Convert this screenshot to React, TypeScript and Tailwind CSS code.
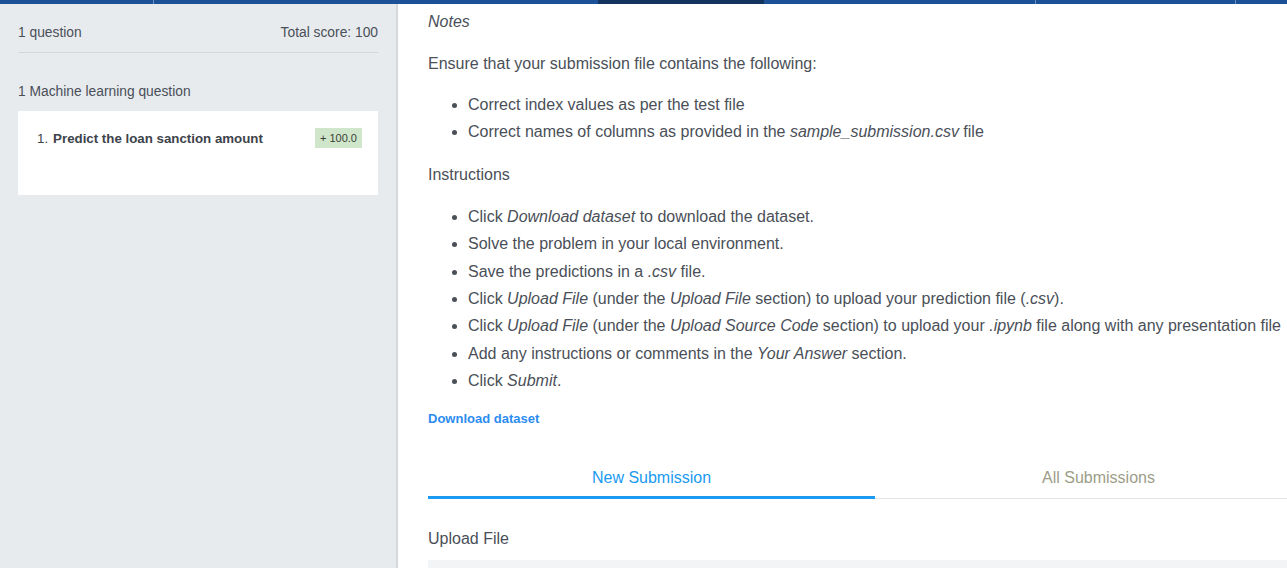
import React from "react";

const font = { fontFamily: '"Liberation Sans", Arial, sans-serif' };

export default function App() {
  return (
    <div className="h-[568px] w-[1287px] overflow-hidden bg-white flex flex-col" style={font}>
      <div className="flex h-[4px] shrink-0 bg-[#1d5197]">
        <div className="w-[153px] bg-[#1d5197]" />
        <div className="w-px bg-[#6b8fc0]" />
        <div className="w-[444px] bg-[#1d5197]" />
        <div className="w-[166px] bg-[#12345e]" />
        <div className="w-[271px] bg-[#1d5197]" />
        <div className="w-px bg-[#6b8fc0]" />
        <div className="w-[199px] bg-[#1d5197]" />
        <div className="w-px bg-[#6b8fc0]" />
        <div className="flex-1 bg-[#1d5197]" />
      </div>
      <div className="flex flex-1 min-h-0">
        <aside className="w-[398px] shrink-0 bg-[#e7ebee] border-r-2 border-[#d5d9dc] px-[18px] pt-[21px]">
          <div className="flex justify-between text-[13.8px] leading-[16px] text-[#4a4f58] pb-[11px] border-b border-[#d3d8dc]">
            <span>1 question</span>
            <span>Total score: 100</span>
          </div>
          <div className="mt-[31px] text-[13.8px] leading-[16px] text-[#4a4f58]">1 Machine learning question</div>
          <div className="mt-[11px] h-[84px] bg-white pl-[19px] pr-[16px] pt-[17px] flex justify-between items-start">
            <div className="text-[13.3px] leading-[22px] text-[#3d434b]">
              <span>1.</span>
              <span className="ml-[5px] font-bold">Predict the loan sanction amount</span>
            </div>
            <span className="bg-[#cfe6cb] text-[#3a3f36] text-[11px] leading-[20px] px-[5px]">+ 100.0</span>
          </div>
        </aside>
        <main className="flex-1 min-w-0 pl-[30px] overflow-hidden">
          <div className="w-[894px] text-[16px] text-[#4a4f58]">
            <div className="italic leading-[22px] mt-[7px]">Notes</div>
            <p className="leading-[22px] mt-[20px]">Ensure that your submission file contains the following:</p>
            <ul className="list-disc pl-[40px] mt-[16px] leading-[27px]">
              <li>Correct index values as per the test file</li>
              <li>Correct names of columns as provided in the <i>sample_submission.csv</i> file</li>
            </ul>
            <div className="leading-[22px] mt-[19px]">Instructions</div>
            <ul className="list-disc pl-[40px] mt-[17px] leading-[27.35px] whitespace-nowrap">
              <li>Click <i>Download dataset</i> to download the dataset.</li>
              <li>Solve the problem in your local environment.</li>
              <li>Save the predictions in a <i>.csv</i> file.</li>
              <li>Click <i>Upload File</i> (under the <i>Upload File</i> section) to upload your prediction file (<i>.csv</i>).</li>
              <li>Click <i>Upload File</i> (under the <i>Upload Source Code</i> section) to upload your <i>.ipynb</i> file along with any presentation file</li>
              <li>Add any instructions or comments in the <i>Your Answer</i> section.</li>
              <li>Click <i>Submit</i>.</li>
            </ul>
            <div className="mt-[15px] text-[13px] leading-[20px] font-bold text-[#2c8cf0]">Download dataset</div>
            <div className="mt-[38px] flex border-b border-[#e3e3e3]">
              <div className="flex-1 text-center leading-[22px] pb-[7px] text-[#1a9af1] border-b-[3px] border-[#1a9af1] -mb-px">New Submission</div>
              <div className="flex-1 text-center leading-[22px] pb-[7px] text-[#9c9d88]">All Submissions</div>
            </div>
            <div className="mt-[29px] leading-[22px]">Upload File</div>
            <div className="mt-[10px] h-[40px] bg-[#f3f4f6]" />
          </div>
        </main>
      </div>
    </div>
  );
}
